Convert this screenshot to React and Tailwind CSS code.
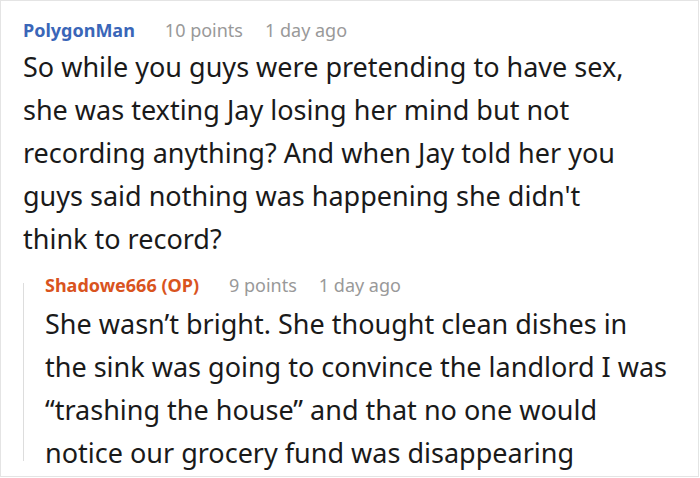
import React from 'react';

const Comment = ({ name, nameColor, points, time, bodyClass, children }) => (
  <div>
    <div className="flex items-baseline text-[18px] leading-[24px]">
      <span className="font-bold" style={{ color: nameColor }}>{name}</span>
      <span className="ml-[30px] text-[#999999]">{points}</span>
      <span className="ml-[22px] text-[#999999]">{time}</span>
    </div>
    <p className={`text-[27px] leading-[43px] text-[#1a1a1a] ${bodyClass}`}>{children}</p>
  </div>
);

const App = () => {
  return (
    <div className="w-[699px] h-[477px] bg-white border border-[#e4e4e4] overflow-hidden font-['Noto_Sans',sans-serif]">
      <div className="pl-[22px] pr-[52px] pt-[17px]">
        <Comment name="PolygonMan" nameColor="#3a66b8" points="10 points" time="1 day ago" bodyClass="mt-[3px]">
          So while you guys were pretending to have sex, she was texting Jay losing her mind but not recording anything? And when Jay told her you guys said nothing was happening she didn't think to record?
        </Comment>
      </div>
      <div className="ml-[22px] mt-[13px] flex">
        <div className="w-px mt-[10px] mb-[13px] bg-[#dddddd] shrink-0" />
        <div className="pl-[21px] pr-[2px]">
          <Comment name="Shadowe666 (OP)" nameColor="#d9541e" points="9 points" time="1 day ago" bodyClass="mt-[5px] whitespace-nowrap">
            She wasn’t bright. She thought clean dishes in<br />
            the sink was going to convince the landlord I was<br />
            “trashing the house” and that no one would<br />
            notice our grocery fund was disappearing
          </Comment>
        </div>
      </div>
    </div>
  );
};

export default App;
